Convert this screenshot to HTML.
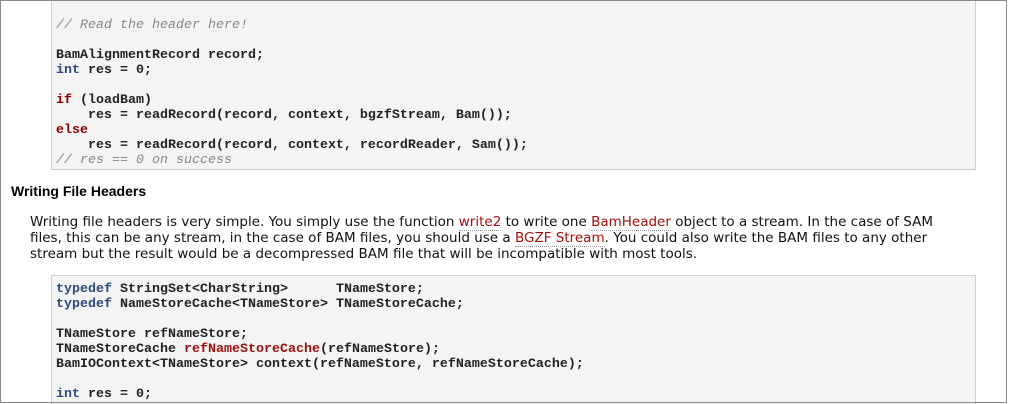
<!DOCTYPE html>
<html><head><meta charset="utf-8"><style>
html,body{margin:0;padding:0;background:#fff;overflow:hidden;}
body{width:1009px;height:404px;position:relative;overflow:hidden;}
.frame{position:absolute;left:0;top:0;width:1005px;height:401px;border:1px solid #8a8a8a;z-index:5;}
.code{position:absolute;left:51px;width:923px;background:#f4f4f4;border:1px solid #cfcfcf;}
.code pre{margin:0;position:absolute;left:4px;font-family:"Liberation Mono",monospace;font-weight:bold;font-size:13.33px;line-height:15px;color:#222;}
.c{color:#888;font-style:italic;font-weight:normal;}
.k{color:#2e4a7a;}
.r{color:#8b0000;}
.f{color:#9a1010;}
h3{position:absolute;left:11px;top:183px;margin:0;font-family:"Liberation Sans",sans-serif;font-size:14px;font-weight:bold;color:#000;}
.p{position:absolute;left:30px;top:214px;font-family:"DejaVu Sans",sans-serif;font-size:13.5px;line-height:16px;color:#111;white-space:nowrap;}
.p a{color:#a50f0f;text-decoration:none;border-bottom:1px dotted #999;}
</style></head><body>
<div class="frame"></div>
<div class="code" style="top:-2px;height:170px;">
<pre style="top:19px;"><span class="c">// Read the header here!</span>

BamAlignmentRecord record;
<span class="k">int</span> res = 0;

<span class="r">if</span> (loadBam)
    res = readRecord(record, context, bgzfStream, Bam());
<span class="r">else</span>
    res = readRecord(record, context, recordReader, Sam());
<span class="c">// res == 0 on success</span></pre>
</div>
<h3>Writing File Headers</h3>
<div class="p">Writing file headers is very simple. You simply use the function <a>write2</a> to write one <a>BamHeader</a> object to a stream. In the case of SAM<br>files, this can be any stream, in the case of BAM files, you should use a <a>BGZF Stream</a>. You could also write the BAM files to any other<br>stream but the result would be a decompressed BAM file that will be incompatible with most tools.</div>
<div class="code" style="top:275px;height:135px;">
<pre style="top:6px;"><span class="k">typedef</span> StringSet&lt;CharString&gt;      TNameStore;
<span class="k">typedef</span> NameStoreCache&lt;TNameStore&gt; TNameStoreCache;

TNameStore refNameStore;
TNameStoreCache <span class="f">refNameStoreCache</span>(refNameStore);
BamIOContext&lt;TNameStore&gt; context(refNameStore, refNameStoreCache);

<span class="k">int</span> res = 0;</pre>
</div>
</body></html>
